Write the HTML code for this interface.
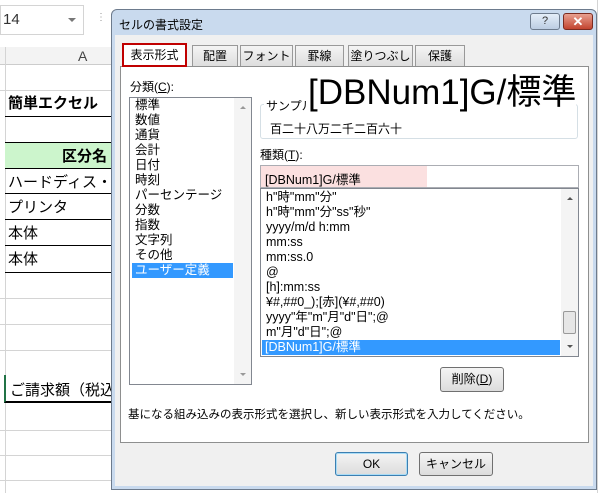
<!DOCTYPE html><html><head><meta charset="utf-8"><style>
*{margin:0;padding:0;box-sizing:border-box}
body{width:600px;height:493px;overflow:hidden;background:#fff;position:relative;font-family:"Liberation Sans","Noto Sans CJK JP",sans-serif;font-size:12px;color:#000}
.a{position:absolute}
.hl{position:absolute;height:1px;background:#d4d4d4}
.vl{position:absolute;width:1px;background:#d4d4d4}
.cell{position:absolute;left:5px;font-size:15px;white-space:nowrap}
.tab{position:absolute;top:45px;height:22px;border:1px solid #999;border-bottom:none;background:linear-gradient(#f4f4f4,#dcdcdc);font-size:12px;text-align:center;line-height:20px}
.li{position:absolute;left:2px;height:15px;line-height:15px;font-size:12.5px;white-space:nowrap;padding-left:3px}
.btn{position:absolute;border:1px solid #707070;border-radius:3px;background:linear-gradient(#f4f4f4,#dcdcdc);text-align:center;font-size:12px}
</style></head><body>
<div class="a" style="left:0;top:5px;width:84px;height:30px;border:1px solid #d4d4d4;font-size:15px;line-height:28px;padding-left:2px;color:#333">14</div>
<div class="a" style="left:68px;top:18px;border-left:4px solid transparent;border-right:4px solid transparent;border-top:4px solid #777"></div>
<div class="a" style="left:96px;top:12px;color:#999;font-size:10px">⋮</div>
<div class="a" style="left:0;top:47px;width:111px;height:18px;background:#f3f3f3;border-bottom:1px solid #ccc"></div>
<div class="a" style="left:78px;top:48px;font-size:14px;color:#444">A</div>
<div class="vl" style="left:5px;top:47px;height:446px"></div>
<div class="hl" style="left:0;top:90px;width:111px"></div>
<div class="cell" style="top:92px;left:8px;font-weight:bold">簡単エクセル</div>
<div class="a" style="left:5px;top:116px;width:106px;height:1px;background:#000"></div>
<div class="a" style="left:5px;top:142px;width:106px;height:26px;background:#ccf5cc;border-top:1px solid #000"></div>
<div class="cell" style="top:145px;left:62px;font-weight:bold">区分名</div>
<div class="a" style="left:5px;top:168px;width:106px;height:1px;background:#000"></div>
<div class="cell" style="top:171px;left:8px">ハードディス・</div>
<div class="a" style="left:5px;top:193px;width:106px;height:1px;background:#000"></div>
<div class="cell" style="top:196px;left:8px">プリンタ</div>
<div class="a" style="left:5px;top:219px;width:106px;height:1px;background:#000"></div>
<div class="cell" style="top:222px;left:8px">本体</div>
<div class="a" style="left:5px;top:245px;width:106px;height:1px;background:#000"></div>
<div class="cell" style="top:248px;left:8px">本体</div>
<div class="a" style="left:5px;top:272px;width:106px;height:1px;background:#000"></div>
<div class="hl" style="left:0;top:298px;width:111px"></div>
<div class="hl" style="left:0;top:324px;width:111px"></div>
<div class="hl" style="left:0;top:350px;width:111px"></div>
<div class="a" style="left:4px;top:375px;width:107px;height:28px;border-left:2px solid #217346;border-bottom:2px solid #000"></div>
<div class="cell" style="top:379px;left:10px">ご請求額（税込）</div>
<div class="hl" style="left:0;top:430px;width:111px"></div>
<div class="hl" style="left:0;top:455px;width:111px"></div>
<div class="hl" style="left:0;top:480px;width:111px"></div>
<div class="vl" style="left:597px;top:0;height:493px"></div>
<div class="a" style="left:111px;top:9px;width:486px;height:481px;background:#c9daee;border:1px solid #6d7b8d;border-radius:6px 6px 0 0"></div>
<div class="a" style="left:119px;top:16px;font-size:12px">セルの書式設定</div>
<div class="a" style="left:530px;top:13px;width:30px;height:17px;border:1px solid #6d7b8d;border-radius:3px;background:linear-gradient(#e4eef9,#bccde2);text-align:center;font-size:11px;line-height:15px;color:#333">?</div>
<div class="a" style="left:563px;top:13px;width:30px;height:17px;border:1px solid #7a2b20;border-radius:3px;background:linear-gradient(#e8a090,#c2442f);text-align:center;font-size:13px;line-height:15px;color:#fff;font-weight:bold">✕</div>
<div class="a" style="left:115px;top:35px;width:478px;height:451px;background:#f0f0f0"></div>
<div class="tab" style="left:192px;width:46px">配置</div>
<div class="tab" style="left:240px;width:53px">フォント</div>
<div class="tab" style="left:295px;width:49px">罫線</div>
<div class="tab" style="left:348px;width:65px">塗りつぶし</div>
<div class="tab" style="left:415px;width:50px">保護</div>
<div class="a" style="left:120px;top:66px;width:469px;height:377px;background:#fff;border:1px solid #8e8f8f"></div>
<div class="tab" style="left:122px;top:43px;width:65px;height:24px;background:#fff;border:2px solid #c00000;line-height:20px">表示形式</div>
<div class="a" style="left:130px;top:78px">分類(<u>C</u>):</div>
<div class="a" style="left:129px;top:97px;width:123px;height:288px;border:1px solid #828790;background:#fff">
<div class="li" style="top:0">標準</div><div class="li" style="top:15px">数値</div><div class="li" style="top:30px">通貨</div><div class="li" style="top:45px">会計</div><div class="li" style="top:60px">日付</div><div class="li" style="top:75px">時刻</div><div class="li" style="top:90px">パーセンテージ</div><div class="li" style="top:105px">分数</div><div class="li" style="top:120px">指数</div><div class="li" style="top:135px">文字列</div><div class="li" style="top:150px">その他</div>
<div class="li" style="top:165px;width:101px;background:#3399ff;color:#fff">ユーザー定義</div>
<div class="a" style="right:0;top:0;width:17px;height:286px;background:#f4f4f4"></div>
<div class="a" style="right:5px;top:8px;border-left:3px solid transparent;border-right:3px solid transparent;border-bottom:3px solid #999"></div>
<div class="a" style="right:5px;bottom:8px;border-left:3px solid transparent;border-right:3px solid transparent;border-top:3px solid #999"></div>
</div>
<div class="a" style="left:260px;top:104px;width:318px;height:35px;border:1px solid #d5dfe5;border-radius:3px"></div>
<div class="a" style="left:264px;top:97px;background:#fff;padding:0 2px">サンプル</div>
<div class="a" style="left:306px;top:72px;font-size:35px;background:#fff;line-height:42px;padding-left:2px;white-space:nowrap">[DBNum1]G/標準</div>
<div class="a" style="left:270px;top:120px">百二十八万二千二百六十</div>
<div class="a" style="left:260px;top:146px">種類(<u>T</u>):</div>
<div class="a" style="left:260px;top:165px;width:319px;height:23px;border:1px solid #abadb3;background:#fff"></div>
<div class="a" style="left:261px;top:166px;width:166px;height:21px;background:#fbe0e0"></div>
<div class="a" style="left:265px;top:169px;font-size:12.5px">[DBNum1]G/標準</div>
<div class="a" style="left:260px;top:188px;width:319px;height:169px;border:1px solid #828790;background:#fff;overflow:hidden">
<div class="li" style="top:1px">h"時"mm"分"</div>
<div class="li" style="top:16px">h"時"mm"分"ss"秒"</div>
<div class="li" style="top:31px">yyyy/m/d h:mm</div>
<div class="li" style="top:46px">mm:ss</div>
<div class="li" style="top:61px">mm:ss.0</div>
<div class="li" style="top:76px">@</div>
<div class="li" style="top:91px">[h]:mm:ss</div>
<div class="li" style="top:106px">¥#,##0_);[赤](¥#,##0)</div>
<div class="li" style="top:121px">yyyy"年"m"月"d"日";@</div>
<div class="li" style="top:136px">m"月"d"日";@</div>
<div class="li" style="top:151px;left:1px;width:298px;background:#3399ff;color:#fff">[DBNum1]G/標準</div>
<div class="a" style="right:0;top:0;width:17px;height:167px;background:#f4f4f4"></div>
<div class="a" style="right:5px;top:8px;border-left:3px solid transparent;border-right:3px solid transparent;border-bottom:3px solid #555"></div>
<div class="a" style="right:2px;top:122px;width:13px;height:23px;border:1px solid #999;border-radius:2px;background:#e6e6e6"></div>
<div class="a" style="right:5px;bottom:8px;border-left:3px solid transparent;border-right:3px solid transparent;border-top:3px solid #555"></div>
</div>
<div class="btn" style="left:440px;top:367px;width:64px;height:25px;line-height:23px">削除(<u>D</u>)</div>
<div class="a" style="left:128px;top:406px;font-size:11.5px">基になる組み込みの表示形式を選択し、新しい表示形式を入力してください。</div>
<div class="btn" style="left:335px;top:452px;width:73px;height:24px;line-height:22px;border-color:#3c7fb1;box-shadow:inset 0 0 0 1px #a9dcf6">OK</div>
<div class="btn" style="left:419px;top:452px;width:74px;height:24px;line-height:22px">キャンセル</div>
</body></html>
